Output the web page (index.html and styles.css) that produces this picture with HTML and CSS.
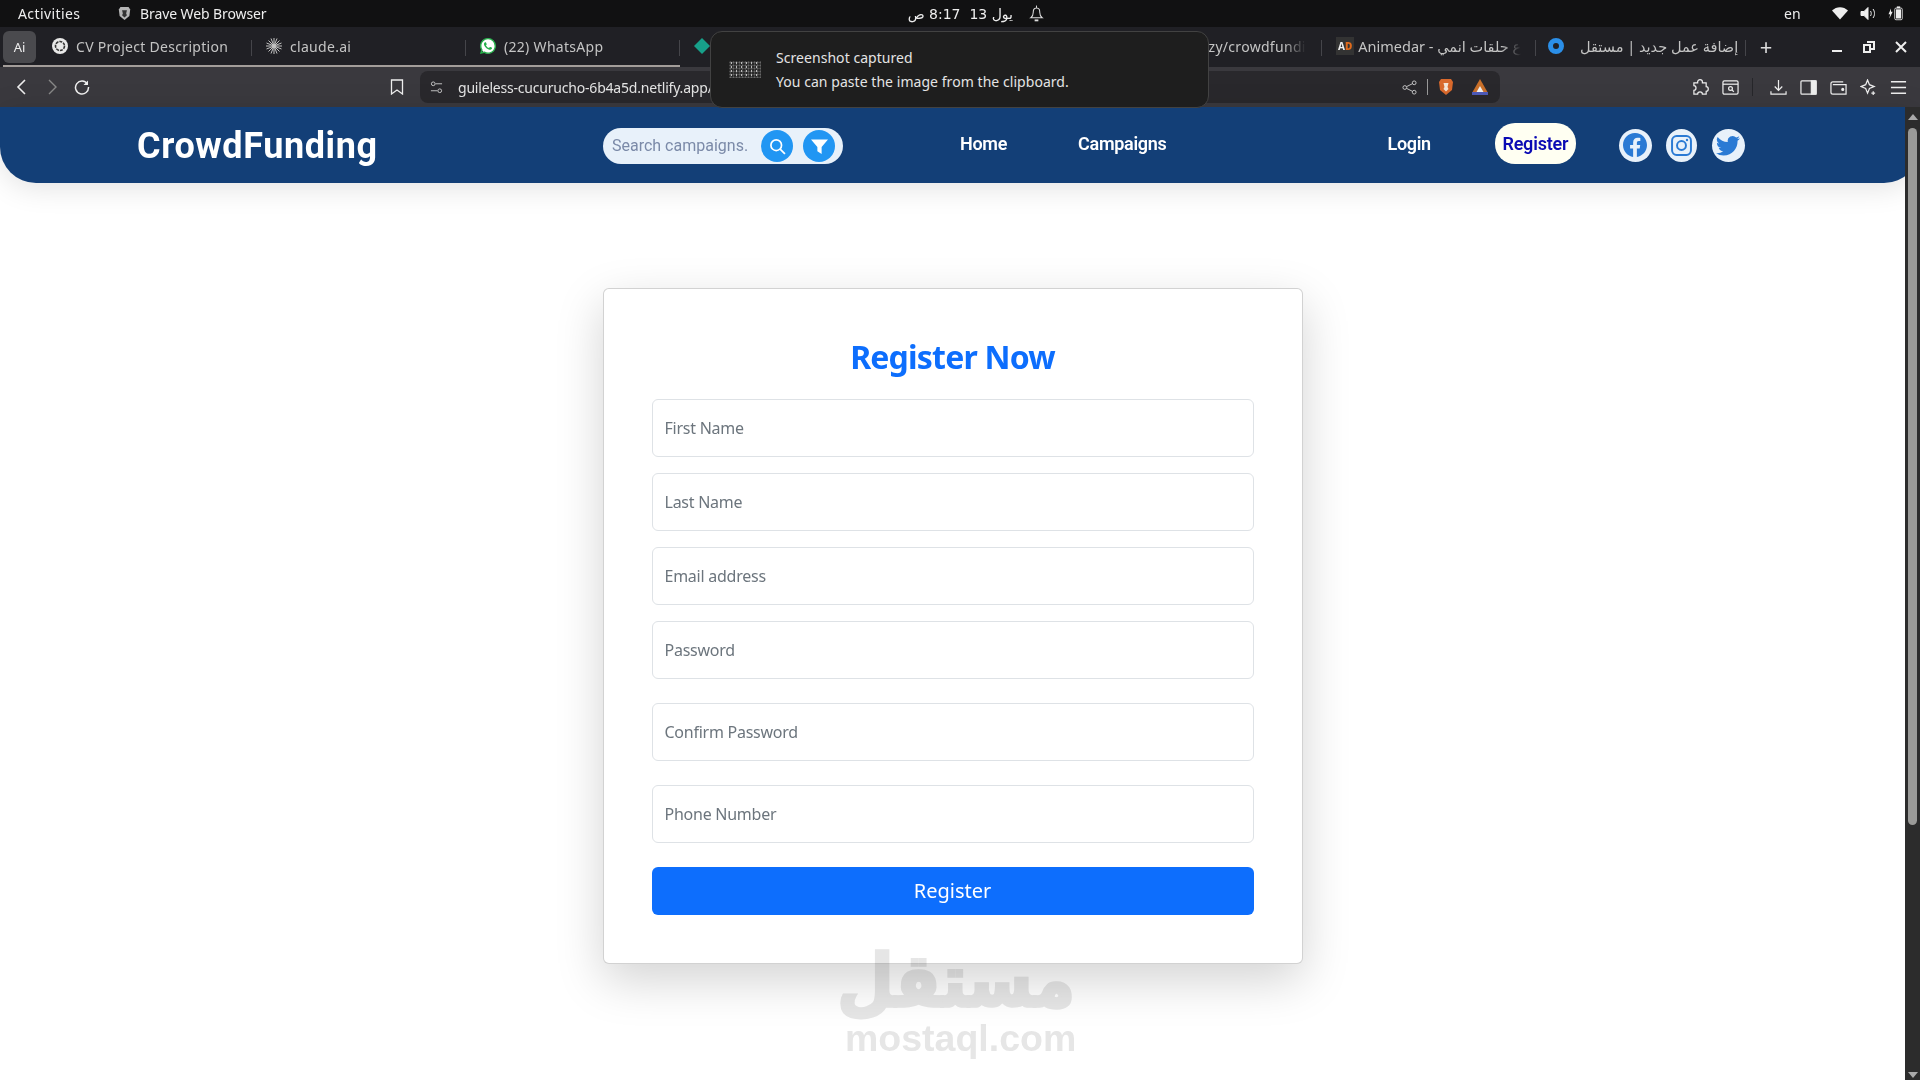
FILE: index.html
```html
<!DOCTYPE html>
<html lang="en">
<head>
  <meta charset="UTF-8">
  <title>CrowdFunding - Register</title>
  <link rel="stylesheet" href="styles.css">
</head>
<body>
  <!-- desktop top bar -->
  <div class="topbar">
    <span class="activities">Activities</span>
    <svg class="brave-mini" viewBox="0 0 16 18"><path d="M3 1h10l2 3-1 8-6 5-6-5-1-8z" fill="#b5b5b5"/><path d="M5 5h6l-1 4 1 2-3 3-3-3 1-2z" fill="#333"/></svg>
    <span class="app-name">Brave Web Browser</span>
    <div class="clock" dir="rtl">يول 13 &nbsp;8:17 ص</div>
    <svg class="bell" viewBox="0 0 16 18" fill="none" stroke="#ddd" stroke-width="1.1"><path d="M8 2.500c-3 0-3.500 2-3.500 5 0 2.500-1 4.500-2.500 5.500h12c-1.500-1-2.500-3-2.500-5.500 0-3-.5-5-3.500-5z"/><path d="M8 0v2.500"/><path d="M6 15.800h4" stroke-width="2"/></svg>
    <span class="lang">en</span>
    <svg class="tray" viewBox="0 0 16 14"><path d="M0 4c4.500-4.500 11.500-4.500 16 0L8 13z" fill="#eee"/></svg>
    <svg class="tray" viewBox="0 0 16 14" fill="none" stroke="#eee"><path d="M1 5h3l4-4v12l-4-4H1z" fill="#eee"/><path d="M10.500 4.500c1 1.500 1 3.500 0 5M13 2.500c2 2.500 2 6.500 0 9"/></svg>
    <svg class="tray" viewBox="0 0 18 18"><path d="M3 3l-3 7h2l-1 5 4-8H3z" fill="#eee"/><rect x="7.500" y="2.500" width="9" height="14" rx="1.500" fill="none" stroke="#eee"/><rect x="9" y="4" width="6" height="11" fill="#eee"/><rect x="10" y="0.500" width="4" height="2" fill="#eee"/></svg>
  </div>

  <!-- browser tabs -->
  <div class="tabstrip">
    <div class="tabgroup">
      <span class="ai-box">Ai</span>
      <div class="tab">
        <svg class="tab-icon" viewBox="0 0 16 16"><circle cx="8" cy="8" r="8" fill="#e8e8e8"/><circle cx="8" cy="8" r="4.500" fill="none" stroke="#333" stroke-width="1.600" stroke-dasharray="3 1"/></svg>
        <span class="tab-title">CV Project Description</span>
      </div>
      <div class="tab">
        <svg class="tab-icon" viewBox="0 0 16 16" stroke="#c4c4c4" stroke-width="1"><path d="M8 0v16M0 8h16M2.500 2.500l11 11M13.500 2.500l-11 11M5 .5l6 15M11 .5l-6 15M.5 5l15 6M.5 11l15-6"/></svg>
        <span class="tab-title">claude.ai</span>
      </div>
      <div class="tab">
        <svg class="tab-icon" viewBox="0 0 16 16"><circle cx="8" cy="8" r="7.500" fill="#fff"/><path fill="#25b04a" d="M13.601 2.326A7.854 7.854 0 0 0 7.994 0C3.627 0 .068 3.558.064 7.926c0 1.399.366 2.76 1.057 3.965L0 16l4.204-1.102a7.933 7.933 0 0 0 3.79.965h.004c4.368 0 7.926-3.558 7.93-7.93A7.898 7.898 0 0 0 13.6 2.326zM7.994 14.521a6.573 6.573 0 0 1-3.356-.92l-.24-.144-2.494.654.666-2.433-.156-.251a6.56 6.56 0 0 1-1.007-3.505c0-3.626 2.957-6.584 6.591-6.584a6.56 6.56 0 0 1 4.66 1.931 6.557 6.557 0 0 1 1.928 4.66c-.004 3.639-2.961 6.592-6.592 6.592zm3.615-4.934c-.197-.099-1.17-.578-1.353-.646-.182-.065-.315-.099-.445.099-.133.197-.513.646-.627.775-.114.133-.232.148-.43.05-.197-.1-.836-.308-1.592-.985-.59-.525-.985-1.175-1.103-1.372-.114-.198-.011-.304.088-.403.087-.088.197-.232.296-.346.1-.114.133-.198.198-.33.065-.134.034-.248-.015-.347-.05-.099-.445-1.076-.612-1.47-.16-.389-.323-.335-.445-.34-.114-.007-.247-.007-.38-.007a.729.729 0 0 0-.529.247c-.182.198-.691.677-.691 1.654 0 .977.71 1.916.81 2.049.098.133 1.394 2.132 3.383 2.992.47.205.84.326 1.129.418.475.152.904.129 1.246.08.38-.058 1.171-.48 1.338-.943.164-.464.164-.86.114-.943-.049-.084-.182-.133-.38-.232z"/></svg>
        <span class="tab-title">(22) WhatsApp</span>
      </div>
    </div>
    <div class="tab">
      <svg class="tab-icon" viewBox="0 0 16 16"><path d="M8 0l8 8-8 8-8-8z" fill="#17a08a"/></svg>
    </div>
    <div class="tab"></div>
    <div class="tab">
      <span class="tab-title tab-fade">hub.com/fuzzy/crowdfundi</span>
    </div>
    <div class="tab tab-ad">
      <span class="ad-icon">A<b>D</b></span>
      <span class="tab-title tab-fade tab-arabic">Animedar - ع حلقات انمي</span>
    </div>
    <div class="tab tab-last">
      <svg class="tab-icon" viewBox="0 0 16 16"><circle cx="8" cy="8" r="5.500" fill="none" stroke="#2b8fe8" stroke-width="5"/></svg>
      <span class="tab-title tab-arabic" dir="rtl">إضافة عمل جديد | مستقل</span>
    </div>
    <span class="new-tab">+</span>
    <div class="win-btns">
      <svg viewBox="0 0 12 12" stroke="#eee" stroke-width="2"><path d="M1 10h10"/></svg>
      <svg viewBox="0 0 12 12" fill="none" stroke="#eee" stroke-width="2"><path d="M4 1h7v7H8"/><rect x="1" y="4" width="6" height="7"/></svg>
      <svg viewBox="0 0 12 12" stroke="#eee" stroke-width="2"><path d="M1 1l10 10M11 1L1 11"/></svg>
    </div>
  </div>

  <!-- browser toolbar -->
  <div class="toolbar">
    <svg class="tool back" viewBox="0 0 16 16" fill="none" stroke="#eee" stroke-width="1.600"><path d="M11 1L4 8l7 7"/></svg>
    <svg class="tool forward" viewBox="0 0 16 16" fill="none" stroke="#888" stroke-width="1.400"><path d="M5 1l7 7-7 7"/></svg>
    <svg class="tool reload" viewBox="0 0 16 16" fill="none" stroke="#eee" stroke-width="1.500"><path d="M13.500 5A6.500 6.500 0 1 0 14.500 8"/><path d="M14 1.500V6H9.500" fill="#eee" stroke="none"/></svg>
    <svg class="tool bookmark" viewBox="0 0 16 16" fill="none" stroke="#eee" stroke-width="1.300"><path d="M2.500 1h11v14L8 11l-5.500 4z"/></svg>
    <div class="addressbar">
      <svg class="tune" viewBox="0 0 14 14" fill="none" stroke="#ccc"><circle cx="3.500" cy="3" r="2"/><path d="M6 3h7M1 10.500h7"/><circle cx="10.500" cy="10.500" r="2"/></svg>
      <span class="url">guileless-cucurucho-6b4a5d.netlify.app/</span>
      <svg class="share" viewBox="0 0 16 16" fill="none" stroke="#ccc"><circle cx="13" cy="3" r="2"/><circle cx="3" cy="8" r="2"/><circle cx="13" cy="13" r="2"/><path d="M5 7l6-3M5 9l6 3"/></svg>
      <i class="addr-sep"></i>
      <svg class="lion" viewBox="0 0 16 18"><path d="M3 1h10l2 3-1 8-6 5-6-5-1-8z" fill="#d9692c"/><path d="M5.500 5h5l-1 4 1 2L8 13.500 5.500 11l1-2z" fill="#f3e4d6"/></svg>
      <svg class="rewards" viewBox="0 0 16 16"><path d="M8 0l8 14H0z" fill="#c9702a"/><path d="M8 7l3.500 6h-7z" fill="#f1f1f1"/><rect x="0" y="13" width="16" height="3" fill="#4e5bb8"/></svg>
    </div>
    <div class="tool-group">
      <svg viewBox="0 0 18 18" fill="none" stroke="#eee" stroke-width="1.300"><path d="M6 3c0-3 5-3 5 0v1h4v4c3 0 3 5 0 5v3h-4c0-3-5-3-5 0H2v-4c3 0 3-5 0-5V4h4z"/></svg>
      <svg viewBox="0 0 18 18" fill="none" stroke="#eee" stroke-width="1.300"><rect x="1" y="2" width="16" height="14" rx="1.500"/><path d="M1 5.500h16"/><circle cx="9" cy="10" r="2"/><path d="M10.500 11.500l2 2"/></svg>
      <i class="tool-sep"></i>
      <svg viewBox="0 0 18 18" fill="none" stroke="#eee" stroke-width="1.300"><path d="M9 1v11M5 8l4 4 4-4M1 13v3h16v-3"/></svg>
      <svg viewBox="0 0 18 18" fill="none" stroke="#eee" stroke-width="1.300"><rect x="1" y="2" width="16" height="14" rx="1"/><rect x="12" y="2" width="5" height="14" fill="#eee"/></svg>
      <svg viewBox="0 0 18 18" fill="none" stroke="#eee" stroke-width="1.300"><path d="M14 3H3a2 2 0 0 0-2 2v9a2 2 0 0 0 2 2h14V6H3"/><circle cx="13.500" cy="11" r="1" fill="#eee"/></svg>
      <svg viewBox="0 0 18 18" fill="none" stroke="#eee" stroke-width="1.300"><path d="M8 1l2 5 5 2-5 2-2 5-2-5-5-2 5-2z"/><path d="M14 13v4M12 15h4"/></svg>
      <svg viewBox="0 0 18 18" stroke="#eee" stroke-width="1.600"><path d="M1 3h16M1 9h16M1 15h16"/></svg>
    </div>
  </div>

  <div class="page">
    <div class="viewport">
      <nav class="navbar">
        <span class="brand">CrowdFunding</span>
        <div class="search">
          <input class="search-input" type="text" placeholder="Search campaigns...">
          <span class="round-btn">
            <svg viewBox="0 0 16 16" fill="none" stroke="#fff" stroke-width="1.600"><circle cx="6.800" cy="6.800" r="5"/><path d="M10.500 10.500L15 15"/></svg>
          </span>
          <span class="round-btn">
            <svg viewBox="0 0 16 16"><path d="M0 1.500h16l-6 7v6.500l-4-2.500v-4z" fill="#fff"/></svg>
          </span>
        </div>
        <a class="nav-link home">Home</a>
        <a class="nav-link campaigns">Campaigns</a>
        <a class="nav-link login">Login</a>
        <a class="register-pill">Register</a>
        <div class="socials">
          <span class="social">
            <svg viewBox="0 0 16 16"><path fill="#2a7ad4" d="M16 8.049c0-4.446-3.582-8.05-8-8.05C3.580 0-.002 3.603-.002 8.050c0 4.017 2.926 7.347 6.750 7.951v-5.625h-2.030V8.050H6.750V6.275c0-2.017 1.195-3.131 3.022-3.131.876 0 1.791.157 1.791.157v1.980h-1.009c-.993 0-1.303.621-1.303 1.258v1.510h2.218l-.354 2.326H9.250V16c3.824-.604 6.750-3.934 6.750-7.951z"/></svg>
          </span>
          <span class="social social-narrow">
            <svg viewBox="0 0 16 16" fill="none" stroke="#2a7ad4" stroke-width="1.500"><rect x="0.800" y="0.800" width="14.400" height="14.400" rx="3.500"/><circle cx="8" cy="8" r="3.400"/><circle cx="12.200" cy="3.800" r="0.900" fill="#2a7ad4" stroke="none"/></svg>
          </span>
          <span class="social">
            <svg viewBox="0 0 16 16"><path fill="#2a7ad4" d="M5.026 15c6.038 0 9.341-5.003 9.341-9.334 0-.14 0-.282-.006-.422A6.685 6.685 0 0 0 16 3.542a6.658 6.658 0 0 1-1.889.518 3.301 3.301 0 0 0 1.447-1.817 6.533 6.533 0 0 1-2.087.793A3.286 3.286 0 0 0 7.875 6.030a9.325 9.325 0 0 1-6.767-3.429 3.289 3.289 0 0 0 1.018 4.382A3.323 3.323 0 0 1 .640 6.575v.045a3.288 3.288 0 0 0 2.632 3.218 3.203 3.203 0 0 1-.865.115 3.230 3.230 0 0 1-.614-.057 3.283 3.283 0 0 0 3.067 2.277A6.588 6.588 0 0 1 .780 13.580a6.320 6.320 0 0 1-.780-.045A9.344 9.344 0 0 0 5.026 15z"/></svg>
          </span>
        </div>
      </nav>

      <form class="card">
        <h2 class="card-title">Register Now</h2>
        <input class="field" type="text" placeholder="First Name">
        <input class="field" type="text" placeholder="Last Name">
        <input class="field" type="email" placeholder="Email address">
        <input class="field field-wide" type="password" placeholder="Password">
        <input class="field field-wide" type="password" placeholder="Confirm Password">
        <input class="field field-wide" type="text" placeholder="Phone Number">
        <button class="submit" type="button">Register</button>
      </form>
    </div>

    <div class="scrollbar">
      <i class="arrow-up"></i>
      <i class="thumb"></i>
      <i class="arrow-down"></i>
    </div>
  </div>

  <!-- screenshot toast, sits over the browser chrome -->
  <div class="toast">
    <div class="toast-thumb"></div>
    <div>
      <div class="toast-title">Screenshot captured</div>
      <div class="toast-text">You can paste the image from the clipboard.</div>
    </div>
  </div>

  <!-- site watermark -->
  <div class="watermark">
    <div class="wm-logo" dir="rtl">مستقل</div>
    <div class="wm-text">mostaql.com</div>
  </div>
</body>
</html>
```

FILE: styles.css
```css
* {
  box-sizing: border-box;
}

html, body {
  margin: 0;
  height: 1080px;
  overflow: hidden;
}

body {
  font-family: "Noto Sans", "DejaVu Sans", sans-serif;
  background-color: #fff;
  display: flex;
  flex-direction: column;
}

/* top bar */
.topbar {
  height: 27px;
  background-color: #111112;
  color: #eee;
  font-size: 14px;
  display: flex;
  align-items: center;
  flex-shrink: 0;
}

.activities {
  margin-left: 18px;
  width: 100px;
  letter-spacing: 0.4px;
}

.brave-mini {
  width: 13px;
  height: 15px;
}

.app-name {
  margin-left: 9px;
  width: 747px;
  letter-spacing: -0.1px;
}

.clock {
  width: 160px;
  margin-left: 2px;
  padding-right: 36px;
  font-family: "DejaVu Sans", sans-serif;
  letter-spacing: -0.3px;
  white-space: nowrap;
}

.bell {
  width: 15px;
  height: 18px;
  margin-left: -20px;
}

.lang {
  margin-left: 740px;
  width: 48px;
}

.tray {
  width: 16px;
  height: 15px;
  margin-right: 12px;
}

/* tabs */
.tabstrip {
  height: 40px;
  background-color: #202025;
  color: #c4c4c4;
  font-size: 14px;
  display: flex;
  flex-shrink: 0;
  align-items: stretch;
}

.tabgroup {
  display: flex;
  margin-left: 3px;
  border-bottom: 2px solid #a39d9a;
  height: 40px;
  width: 677px;
}

.ai-box {
  width: 33px;
  height: 32px;
  margin-top: 4px;
  background-color: #4a4a4e;
  border-radius: 6px;
  color: #eee;
  font-size: 13px;
  display: flex;
  align-items: center;
  justify-content: center;
  flex-shrink: 0;
}

.ai-box + .tab {
  margin-left: 2px;
}

.tab {
  width: 214px;
  flex-shrink: 0;
  display: flex;
  align-items: center;
  padding: 0 14px;
  gap: 8px;
  height: 38px;
  position: relative;
  overflow: hidden;
}

.tab::after {
  content: "";
  position: absolute;
  right: 0;
  top: 13px;
  height: 16px;
  width: 1px;
  background-color: #45454a;
}

.tab-ad {
  gap: 4px;
  padding-right: 8px;
}

.tab-last {
  width: 210px;
  padding-left: 12px;
  gap: 16px;
}

.tab-icon {
  width: 16px;
  height: 16px;
  flex-shrink: 0;
}

.tab-title {
  white-space: nowrap;
  letter-spacing: 0.3px;
}

.tab-arabic {
  font-size: 14.500px;
  letter-spacing: 0;
}

.tab-fade {
  -webkit-mask-image: linear-gradient(to right, #000 88%, transparent);
  mask-image: linear-gradient(to right, #000 88%, transparent);
}

.ad-icon {
  background-color: #333;
  color: #eee;
  font-size: 10px;
  font-weight: 700;
  padding: 2px;
  flex-shrink: 0;
}

.ad-icon b {
  color: #e06a1c;
}

.new-tab {
  font-size: 22px;
  line-height: 38px;
  width: 40px;
  text-align: center;
  color: #ddd;
}

.win-btns {
  display: flex;
  align-items: center;
  margin-left: 45px;
  gap: 20px;
}

.win-btns svg {
  width: 12px;
  height: 12px;
}

/* toolbar */
.toolbar {
  height: 40px;
  background-color: #3a393e;
  display: flex;
  align-items: center;
  flex-shrink: 0;
  padding-left: 14px;
}

.tool {
  width: 16px;
  height: 16px;
  flex-shrink: 0;
}

.forward,
.reload {
  margin-left: 14px;
}

.bookmark {
  margin-left: 299px;
}

.addressbar {
  width: 1080px;
  height: 32px;
  margin-left: 15px;
  background-color: #29282c;
  border-radius: 8px;
  display: flex;
  align-items: center;
  padding-left: 10px;
  flex-shrink: 0;
}

.tune {
  width: 13px;
  height: 13px;
}

.url {
  margin-left: 15px;
  color: #e4e4e4;
  font-size: 14px;
  letter-spacing: -0.2px;
  white-space: nowrap;
  width: 944px;
}

.share {
  width: 15px;
  height: 15px;
}

.addr-sep {
  width: 1px;
  height: 16px;
  background-color: #999;
  margin: 0 10px;
}

.lion {
  width: 16px;
  height: 18px;
}

.rewards {
  width: 16px;
  height: 16px;
  margin-left: 18px;
}

.tool-group {
  display: flex;
  align-items: center;
  margin-left: 192px;
  gap: 13px;
}

.tool-group svg {
  width: 17px;
  height: 17px;
}

.tool-sep {
  width: 1px;
  height: 18px;
  background-color: #26262a;
  margin-right: 4px;
}

/* page */
.page {
  flex: 1;
  display: flex;
  min-height: 0;
}

.viewport {
  width: 1905px;
  flex-shrink: 0;
}

.navbar {
  width: 1920px;
  height: 76px;
  background-color: #133f77;
  border-radius: 0 0 36px 36px;
  box-shadow: 0 4px 30px rgba(0, 0, 0, 0.12);
  display: flex;
  align-items: center;
  padding-left: 137px;
  color: #fff;
  font-family: "Roboto", sans-serif;
}

.brand {
  width: 466px;
  margin-top: 2px;
  font-size: 36px;
  font-weight: 700;
  letter-spacing: 0.6px;
}

.search {
  width: 240px;
  height: 36px;
  background-color: #e8f1fa;
  border-radius: 18px;
  display: flex;
  align-items: center;
  padding-left: 9px;
  margin-top: 2px;
}

.search-input {
  width: 137px;
  margin-right: 12px;
  border: 0;
  background: transparent;
  font-family: "Roboto", sans-serif;
  font-size: 16px;
  padding: 0 0 2px;
  outline: none;
}

.search-input::placeholder {
  color: #7b8aa8;
  opacity: 1;
}

.round-btn {
  width: 32px;
  height: 32px;
  border-radius: 50%;
  background-color: #2196f3;
  display: flex;
  align-items: center;
  justify-content: center;
  margin-right: 10px;
  flex-shrink: 0;
}

.round-btn svg {
  width: 17px;
  height: 17px;
}

.nav-link {
  font-size: 18px;
  font-weight: 600;
  letter-spacing: -0.3px;
  margin-top: -4px;
}

.home {
  margin-left: 117px;
}

.campaigns {
  margin-left: 71px;
}

.login {
  margin-left: 221px;
}

.register-pill {
  margin-left: 64px;
  width: 81px;
  height: 41px;
  border-radius: 20px;
  background-color: #fffff2;
  color: #0a0ab4;
  font-size: 18px;
  font-weight: 600;
  letter-spacing: -0.2px;
  display: flex;
  align-items: center;
  justify-content: center;
  margin-top: -3px;
}

.socials {
  display: flex;
  gap: 14.500px;
  margin-left: 43px;
}

.social {
  width: 33px;
  height: 33px;
  border-radius: 50%;
  background-color: #e8f1fa;
  display: flex;
  align-items: center;
  justify-content: center;
}

.social svg {
  width: 24px;
  height: 24px;
}

.social-narrow {
  width: 31px;
}

.social-narrow svg {
  width: 21px;
  height: 21px;
}

/* register card */
.card {
  width: 700px;
  margin: 105px auto 0;
  padding: 48px;
  background-color: #fff;
  border: 1px solid rgba(0, 0, 0, 0.175);
  border-radius: 6px;
  box-shadow: 0 16px 48px rgba(0, 0, 0, 0.175);
  display: flex;
  flex-direction: column;
}

.card-title {
  margin: 0 0 23px;
  padding-top: 1px;
  font-size: 32px;
  line-height: 38px;
  font-weight: 700;
  letter-spacing: -0.8px;
  color: #0d6efd;
  text-align: center;
}

.field {
  height: 58px;
  margin-bottom: 16px;
  padding: 0 12px;
  border: 1px solid #dee2e6;
  border-radius: 6px;
  font-family: inherit;
  font-size: 16px;
  letter-spacing: -0.25px;
  outline: none;
  flex-shrink: 0;
}

.field-wide {
  margin-bottom: 24px;
}

.field::placeholder {
  color: #6c757d;
  opacity: 1;
}

.submit {
  height: 48px;
  border: 0;
  border-radius: 6px;
  background-color: #0d6efd;
  color: #fff;
  font-family: inherit;
  font-size: 20px;
  padding: 0 0 2px;
}

/* scrollbar */
.scrollbar {
  width: 15px;
  background-color: #2c2c2c;
  position: relative;
  z-index: 1;
  flex-shrink: 0;
  display: flex;
  flex-direction: column;
  align-items: center;
  padding-top: 7px;
}

.arrow-up {
  border: 5px solid transparent;
  border-top: 0;
  border-bottom: 6px solid #aaa;
}

.arrow-down {
  border: 5px solid transparent;
  border-bottom: 0;
  border-top: 6px solid #aaa;
  margin-top: 247px;
}

.thumb {
  width: 9px;
  height: 697px;
  margin-top: 8px;
  background-color: #9a9a98;
  border-radius: 5px;
}

/* toast */
.toast {
  position: absolute;
  z-index: 2;
  left: 710px;
  top: 31px;
  width: 499px;
  height: 77px;
  background-color: #1e1e1e;
  border: 1px solid #424242;
  border-radius: 12px;
  display: flex;
  align-items: center;
  padding-left: 18px;
  gap: 15px;
  color: #e4e4e4;
  font-size: 14px;
  letter-spacing: 0.05px;
}

.toast-thumb {
  width: 32px;
  height: 17px;
  background-color: #2a2a2a;
  background-image:
    radial-gradient(circle, #bbb 0.6px, transparent 1px),
    radial-gradient(circle, #666 0.8px, transparent 1.2px);
  background-size: 5px 4px, 3px 3px;
}

.toast-title {
  margin-bottom: 5px;
}

/* watermark */
.watermark {
  position: absolute;
  z-index: 1;
  left: 845px;
  top: 940px;
  width: 230px;
  text-align: center;
  color: #e6e6e6;
  mix-blend-mode: multiply;
  pointer-events: none;
}

.wm-logo {
  font-family: "DejaVu Sans", sans-serif;
  font-weight: 700;
  font-size: 65px;
  line-height: 78px;
  height: 78px;
  margin-left: 4px;
  -webkit-text-stroke: 3px #e6e6e6;
  transform: scale(1, 1.12);
  transform-origin: 50% 20%;
}

.wm-text {
  font-family: "Liberation Sans", sans-serif;
  font-weight: 700;
  font-size: 37.500px;
  line-height: 42px;
  margin-top: -1px;
}
```
